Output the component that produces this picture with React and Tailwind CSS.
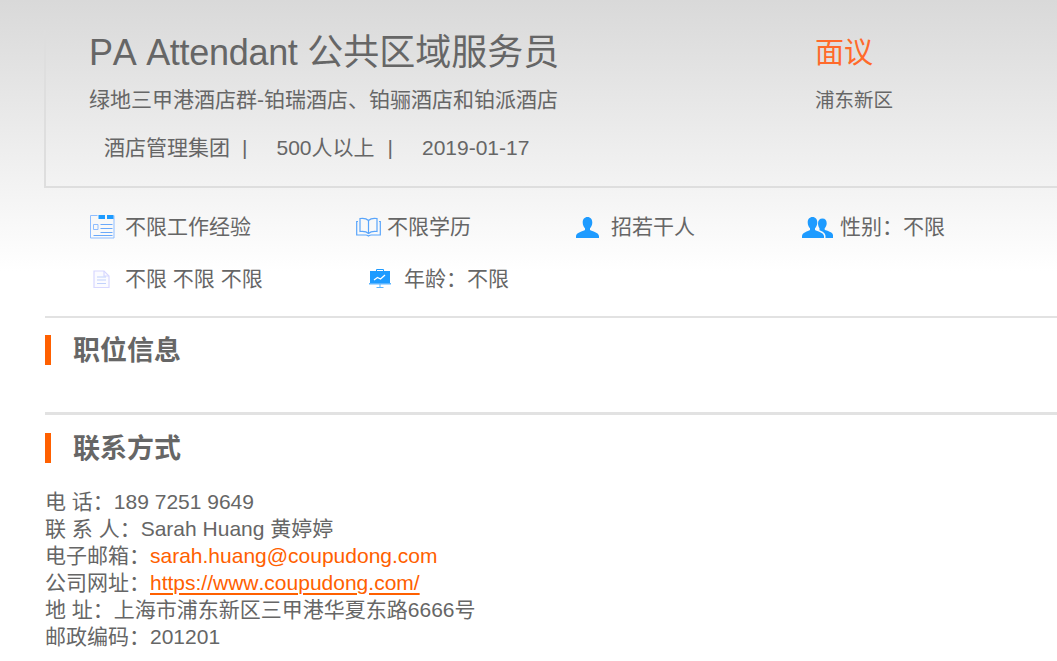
import React from "react";

const fontStack = "font-['Liberation_Sans','Noto_Sans_CJK_SC',sans-serif] [font-kerning:none]";

function CalendarIcon() {
  return (
    <svg width="25" height="24" viewBox="0 0 25 24" fill="none" stroke="#8fbdff" strokeWidth="1">
      <path d="M7.500 .5H.5v22.500h23.500V.5" />
      <path d="M8.500 0h6.500v4H8.500zM17 0h6.500v4H17z" fill="#1e9bff" stroke="none" />
      <path d="M3.500 9.500h4.500v5H3.500z" />
      <path d="M10.500 9.500h12M10.500 13.500h12M10.500 17.500h12M3.500 20.500h19" stroke="#6aa9fa" />
    </svg>
  );
}

function BookIcon() {
  return (
    <svg width="25" height="20" viewBox="0 0 25 20" fill="none" stroke="#59a5fb" strokeWidth="1.2">
      <path d="M12.500 3.500C10.500 1.500 7 1 4 1.500v13c3-.4 6.500 0 8.500 2 2-2 5.500-2.400 8.500-2v-13c-3-.5-6.500 0-8.500 2zM12.500 3.500v13" />
      <path d="M2 4.500H.7v13.500h9c1 0 2 .4 2.800 1 .8-.6 1.800-1 2.800-1h9V4.500H23" />
    </svg>
  );
}

function UserIcon() {
  return (
    <svg width="23" height="21" viewBox="0 0 23 21" fill="#1e9bff">
      <path d="M11.500 0c3 0 4.800 2.300 4.800 5.500 0 2.300-1 4.500-2.300 5.700v1.800c2 1.400 9 2.300 9 6.300V21H0v-1.700c0-4 7-4.900 9-6.300v-1.800C7.700 10 6.700 7.800 6.700 5.500 6.700 2.300 8.500 0 11.500 0z" />
    </svg>
  );
}

function UsersIcon() {
  return (
    <svg width="31" height="21" viewBox="0 0 31 21" fill="#1e9bff">
      <path d="M20.500 1.500c2.600 0 4.200 2 4.200 4.800 0 2-.9 3.900-2 5v1.500c1.800 1.200 8.300 2 8.300 5.500V21h-7.500v-2c0-3-3-4.500-6-5.800v-2c-1-1.200-1.500-3-1.500-4.900 0-2.800 1.700-4.800 4.500-4.800z" />
      <path d="M10.500 0c3 0 4.800 2.300 4.800 5.500 0 2.300-1 4.500-2.300 5.700v1.800c2 1.400 9 2.300 9 6.300V21H0v-1.700c0-4 6-4.900 8-6.300v-1.800C6.700 10 5.700 7.800 5.700 5.500 5.700 2.300 7.500 0 10.500 0z" />
    </svg>
  );
}

function DocIcon() {
  return (
    <svg width="17" height="18" viewBox="0 0 17 18" fill="none" stroke="#d8d8ff" strokeWidth="1.200">
      <path d="M1 1h10l5 5v11.500H1z" fill="#fbfbff" />
      <path d="M11 1v5h5" />
      <path d="M4 7h9M4 10h9M4 13.500h9" stroke="#c2d2fb" />
    </svg>
  );
}

function BoardIcon() {
  return (
    <svg width="22" height="20" viewBox="0 0 22 20" fill="none">
      <path d="M7.500 2.500v-2h7v2" stroke="#1e9bff" />
      <path d="M1 2h20v12H1z" fill="#1e9bff" />
      <path d="M0 14h22v1.500H0zM10.500 15.500h1v2.500h-1zM7.500 18h7v1h-7z" fill="#5cb5ff" />
      <path d="M5 11l3.500-2.500 3 1.500L16 6" stroke="#fff" strokeWidth="1.300" />
    </svg>
  );
}

function SectionTitle({ children }) {
  return (
    <div className="flex items-center h-[30px]">
      <span className="w-1.5 h-[30px] bg-[#ff6000]"></span>
      <h2 className="ml-[22px] pt-px text-[27px] leading-[30px] font-bold text-[#666]">{children}</h2>
    </div>
  );
}

export default function App() {
  return (
    <div className={`${fontStack} h-[661px] overflow-hidden bg-white text-[#666] bg-gradient-to-b from-[#d9d9d9] to-white to-[41%] pl-[44px]`}>
      {/* top box */}
      <div className="mt-[30px] h-[158px] pt-[2px] pl-[43px] border-l-2 border-b-2 border-[#dedede]">
        <div className="flex">
          <h1 className="w-[726px] text-[36px] leading-[42px] whitespace-nowrap">
            <span className="tracking-[-0.3px]">PA Attendant </span>公共区域服务员
          </h1>
          <span className="text-[29px] leading-[42px] text-[#ff6a2b]">面议</span>
        </div>
        <div className="flex mt-[9px] leading-[34px]">
          <p className="w-[726px] text-[21px]">绿地三甲港酒店群-铂瑞酒店、铂骊酒店和铂派酒店</p>
          <p className="text-[19.500px]">浦东新区</p>
        </div>
        <div className="flex mt-[17px] ml-[15px] text-[21px] leading-[28px] whitespace-nowrap">
          <span>酒店管理集团</span>
          <span className="ml-[12px]">|</span>
          <span className="ml-[29px]">500人以上</span>
          <span className="ml-[13px]">|</span>
          <span className="ml-[29px]">2019-01-17</span>
        </div>
      </div>

      {/* job tags */}
      <div className="pl-[45px] text-[21px] leading-[28px] whitespace-nowrap">
        <div className="flex items-center h-[28px] mt-[25px]">
          <span className="w-[267px] pl-px flex items-center">
            <CalendarIcon />
            <span className="ml-[10px]">不限工作经验</span>
          </span>
          <span className="w-[220px] flex items-center">
            <BookIcon />
            <span className="ml-[6px]">不限学历</span>
          </span>
          <span className="w-[226px] flex items-center">
            <UserIcon />
            <span className="ml-[12px]">招若干人</span>
          </span>
          <span className="flex items-center">
            <UsersIcon />
            <span className="ml-[7px]">性别：不限</span>
          </span>
        </div>
        <div className="flex items-center h-[28px] mt-[24px]">
          <span className="w-[280px] pl-[4px] flex items-center">
            <DocIcon />
            <span className="ml-[15px]">不限 不限 不限</span>
          </span>
          <span className="flex items-center">
            <BoardIcon />
            <span className="ml-[13px]">年龄：不限</span>
          </span>
        </div>
      </div>

      {/* job info */}
      <div className="mt-[23px] ml-px pt-[17px] border-t-2 border-[#e2e2e2]">
        <SectionTitle>职位信息</SectionTitle>
      </div>

      {/* contact */}
      <div className="mt-[47px] ml-px pt-[18px] border-t-[3px] border-[#e2e2e2]">
        <SectionTitle>联系方式</SectionTitle>
        <div className="mt-[25px] text-[21px] leading-[27px] whitespace-nowrap">
          <p>电 话：189 7251 9649</p>
          <p>联 系 人：Sarah Huang 黄婷婷</p>
          <p>电子邮箱：<span className="text-[#ff6000]">sarah.huang@coupudong.com</span></p>
          <p>公司网址：<a href="#" className="text-[#ff6000] underline decoration-2 underline-offset-[3px]">https://www.coupudong.com/</a></p>
          <p>地 址：上海市浦东新区三甲港华夏东路6666号</p>
          <p>邮政编码：201201</p>
        </div>
      </div>
    </div>
  );
}
